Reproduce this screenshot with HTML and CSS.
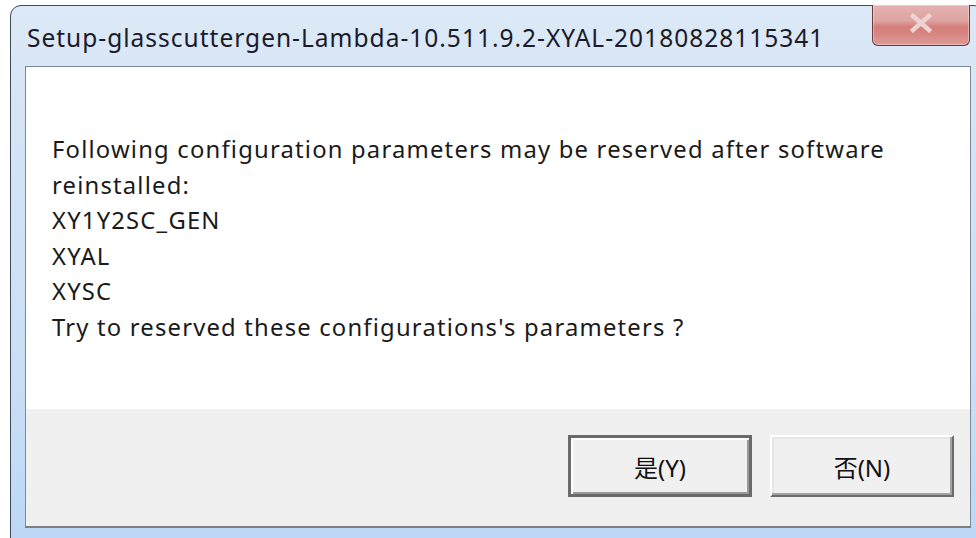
FILE: index.html
```html
<!DOCTYPE html>
<html lang="en">
<head>
<meta charset="utf-8">
<title>Setup</title>
<link rel="stylesheet" href="styles.css">
</head>
<body>
<div class="window">
  <div class="titlebar">
    <span class="title">Setup-glasscuttergen-Lambda-10.511.9.2-XYAL-20180828115341</span>
    <button class="close" aria-label="Close">
      <svg width="34" height="20" viewBox="0 0 34 20">
        <path d="M9 3 L25 17 M25 3 L9 17" stroke="#efd3d3" stroke-width="4.5" stroke-linecap="square" fill="none"/>
      </svg>
    </button>
  </div>
  <div class="client">
    <div class="message">
      <p>Following configuration parameters may be reserved after software reinstalled:</p>
      <p>XY1Y2SC_GEN</p>
      <p>XYAL</p>
      <p>XYSC</p>
      <p>Try to reserved these configurations's parameters ?</p>
    </div>
    <div class="actions">
      <button class="btn btn-default">是(Y)</button>
      <button class="btn">否(N)</button>
    </div>
  </div>
</div>
</body>
</html>
```

FILE: styles.css
```css
html, body {
  margin: 0;
  padding: 0;
  background: #ffffff;
  overflow: hidden;
  width: 976px;
  height: 538px;
}

.window {
  margin: 5px 0 0 10px;
  width: 975px;
  height: 560px;
  box-sizing: border-box;
  border: 1px solid #3c4a5a;
  border-radius: 11px 11px 0 0;
  padding: 0 14px;
  background: linear-gradient(180deg, #dce9f7 0%, #d2e3f5 30%, #c9def5 70%, #bad7f6 100%);
  display: flex;
  flex-direction: column;
}

.titlebar {
  height: 60px;
  display: flex;
  align-items: flex-start;
  flex-shrink: 0;
}

.title {
  font-family: "Noto Sans", "Open Sans", sans-serif;
  font-size: 24.5px;
  letter-spacing: 1px;
  color: #1a1a2a;
  margin: 15px 0 0 2px;
  white-space: nowrap;
}

.close {
  margin: -1px 0 0 auto;
  width: 98px;
  height: 41px;
  padding: 0;
  box-sizing: border-box;
  border: 1px solid #6d3838;
  border-top: none;
  border-radius: 0 0 6px 6px;
  background: linear-gradient(180deg, #e3b3b1 0%, #dca3a1 40%, #d47e7b 55%, #d78783 75%, #de9c97 100%);
  box-shadow: inset 0 0 0 1px rgba(255, 230, 230, 0.45);
  display: flex;
  align-items: center;
  justify-content: center;
}

.close svg {
  display: block;
  margin-top: -4px;
}

.client {
  flex: none;
  display: flex;
  flex-direction: column;
  border: 1px solid #7b8897;
  border-bottom: 2px solid #7f7f7f;
  background: #f0f0f0;
  width: 946px;
  box-sizing: border-box;
}

.message {
  background: #ffffff;
  height: 342px;
  box-sizing: border-box;
  padding: 65px 40px 0 26px;
  font-family: "Noto Sans", "Open Sans", sans-serif;
  font-size: 23.8px;
  letter-spacing: 1.2px;
  line-height: 35.5px;
  color: #1a1a1a;
}

.message p {
  margin: 0;
}

.actions {
  height: 117px;
  box-sizing: border-box;
  display: flex;
  justify-content: flex-end;
  align-items: flex-start;
  gap: 18px;
  padding: 26px 16px 0 0;
}

.btn {
  width: 184px;
  height: 62px;
  box-sizing: border-box;
  background: #f0f0f0;
  border: 2px solid;
  border-color: #ffffff #6b6b6b #6b6b6b #ffffff;
  box-shadow: inset -2px -2px 0 #a3a3a3, inset 2px 2px 0 #e6e6e6;
  font-family: "Noto Sans", "Noto Sans CJK SC", sans-serif;
  font-size: 24px;
  color: #111111;
  padding: 0;
}

.btn-default {
  border: 3px solid #6a6a6a;
  box-shadow: inset 2px 2px 0 #ffffff, inset -2px -2px 0 #9a9a9a;
}
```
